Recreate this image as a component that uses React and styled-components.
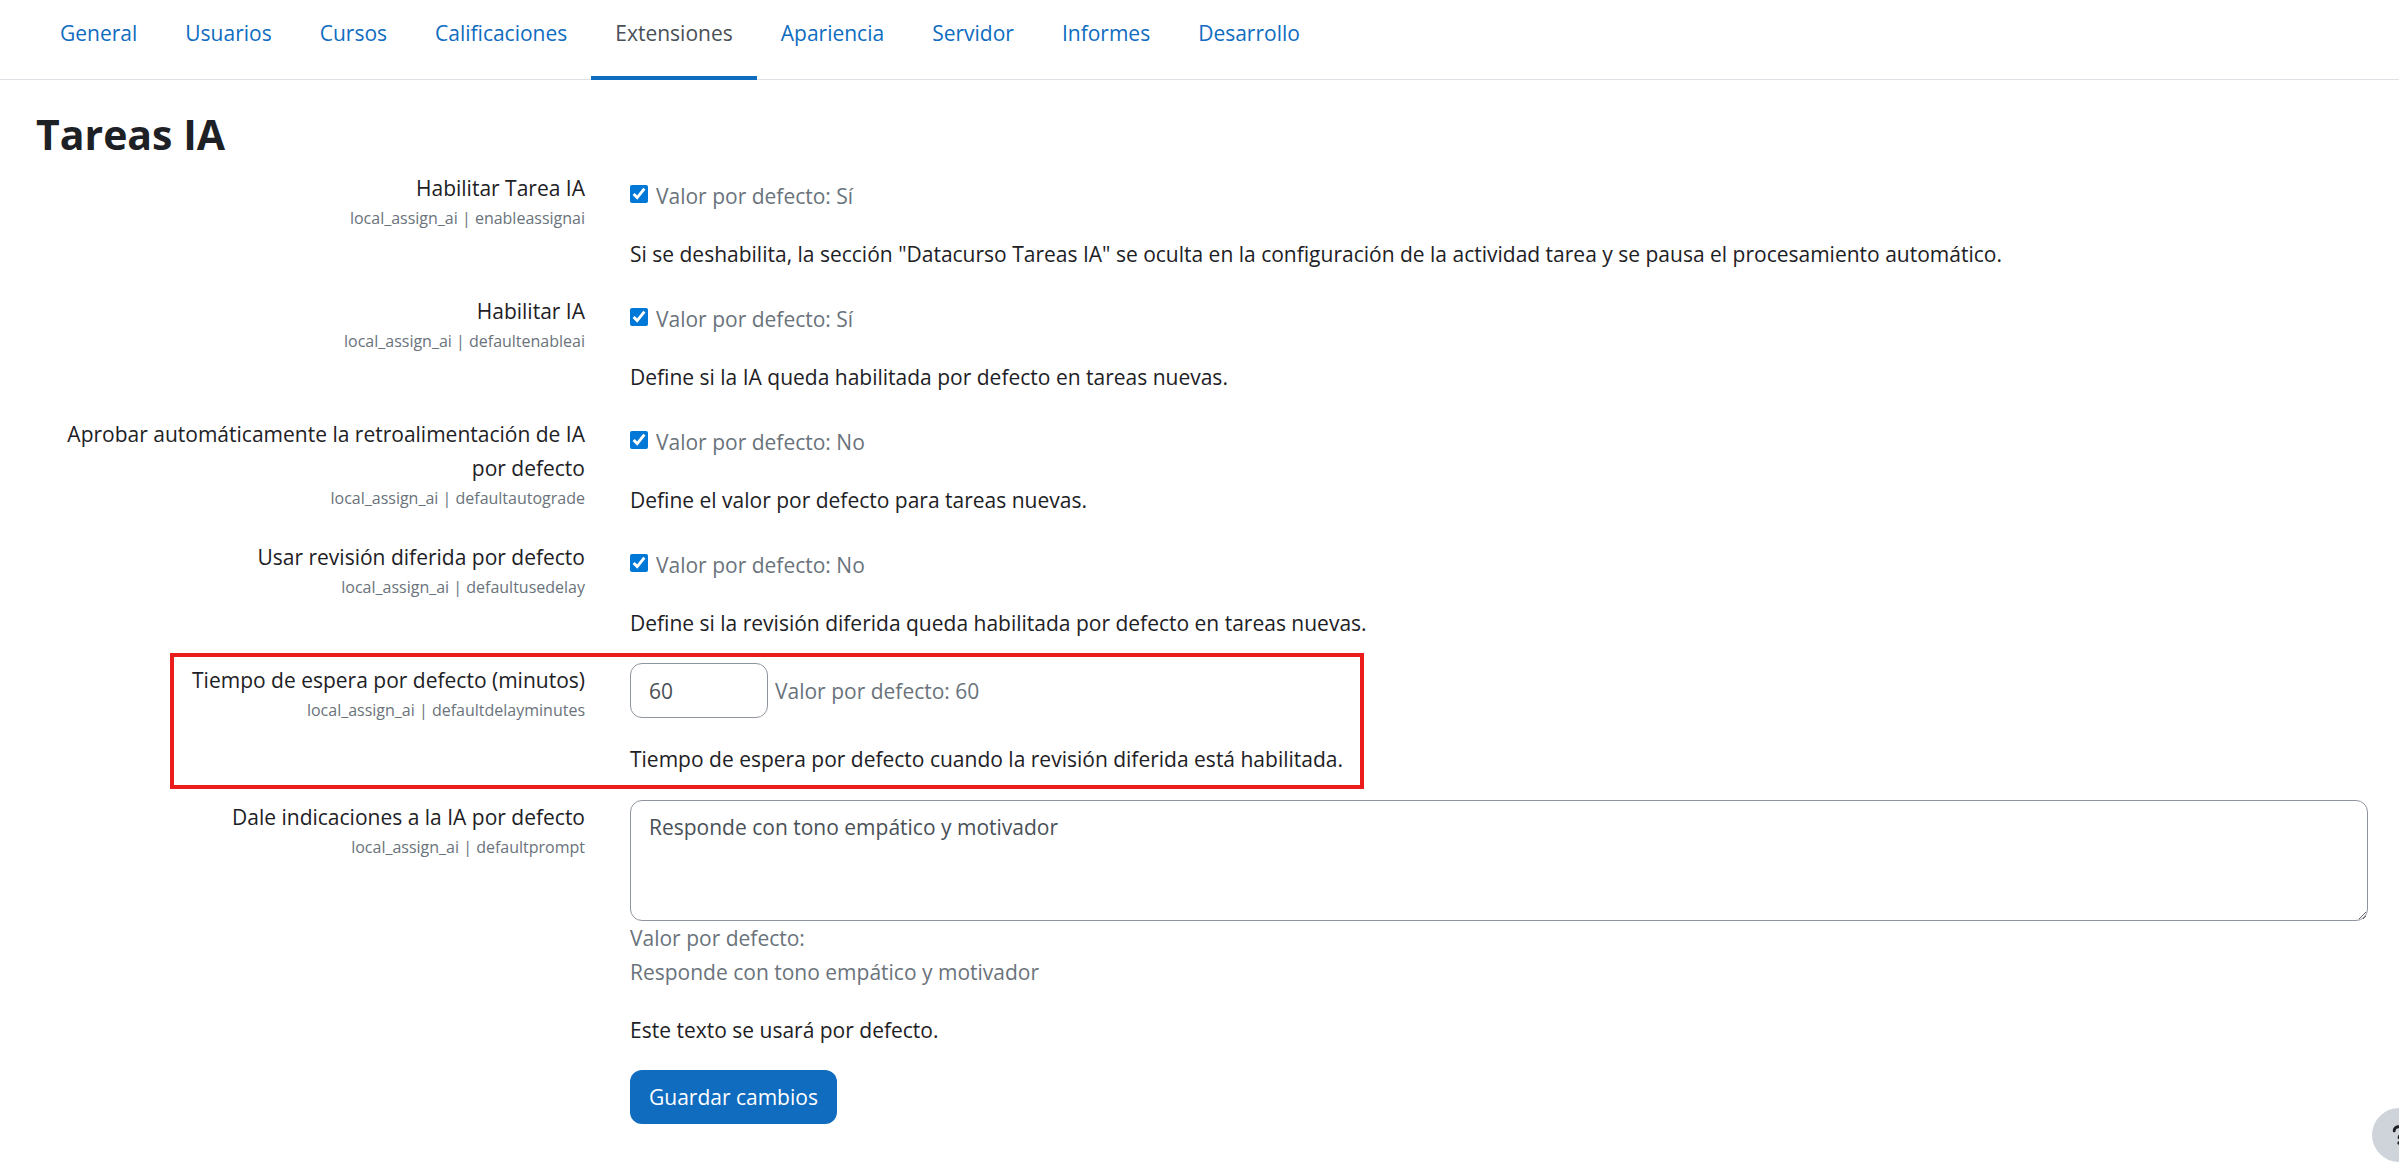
import React from "react";
import styled, { createGlobalStyle } from "styled-components";
import { FaQuestion } from "react-icons/fa6";

const GlobalStyle = createGlobalStyle`
  * {
    box-sizing: border-box;
  }
  body {
    margin: 0;
    background-color: #fff;
    color: #1d2125;
    font-family: "Open Sans", "Noto Sans", sans-serif;
    font-size: 21px;
    line-height: 34px;
  }
  button,
  input,
  textarea {
    font: inherit;
  }
`;

const Nav = styled.nav`
  display: flex;
  height: 80px;
  padding: 0 36px;
  border-bottom: 1px solid #dee2e6;
`;

const Tab = styled.a`
  height: 80px;
  padding: 16px 24px 0;
  border-bottom: 4px solid ${(props) => (props.$active ? "#0f6cbf" : "transparent")};
  color: ${(props) => (props.$active ? "#495057" : "#0f6cbf")};
  text-decoration: none;
  white-space: nowrap;
`;

const Main = styled.main`
  padding: 27px 9px 24px 14px;
`;

const Title = styled.h1`
  margin: 0;
  padding: 0 22px 10px;
  font-size: 41px;
  font-weight: 700;
  line-height: 54px;
`;

const Row = styled.div`
  display: flex;
  position: relative;
  padding-bottom: ${(props) => (props.$highlighted ? "24px" : "23px")};
`;

const LabelColumn = styled.div`
  flex: 0 0 25%;
  padding: 0 23px 0 22px;
  text-align: right;
`;

const Label = styled.label`
  display: block;
`;

const ShortName = styled.span`
  display: block;
  color: #6a737b;
  font-size: 16px;
  line-height: 26px;
`;

const Field = styled.div`
  flex: 1;
  min-width: 0;
  padding: 0 22px;
`;

const CheckLine = styled.div`
  display: flex;
  align-items: center;
  gap: 8px;
  padding-top: 8px;
`;

const Checkbox = styled.input`
  width: 18px;
  height: 18px;
  margin: 0 0 4px;
  accent-color: #0078d7;
`;

const InputLine = styled.div`
  display: flex;
  align-items: center;
  gap: 7px;
`;

const TextInput = styled.input`
  width: 138px;
  height: 55px;
  padding: 8px 18px;
  border: 1px solid #8f959e;
  border-radius: 12px;
  background-color: #fff;
  color: #495057;
`;

const TextArea = styled.textarea`
  display: block;
  width: 100%;
  height: 121px;
  padding: 9px 18px;
  border: 1px solid #8f959e;
  border-radius: 12px;
  background-color: #fff;
  color: #495057;
  resize: vertical;
`;

const Default = styled.div`
  color: #6a737b;
`;

const Description = styled.p`
  margin: 24px 0 0;
`;

const Highlight = styled.div`
  position: absolute;
  top: -10px;
  left: 156px;
  width: 1194px;
  height: 136px;
  border: 4px solid #eb1c1c;
  pointer-events: none;
`;

const Actions = styled.div`
  padding-left: calc(25% + 22px);
`;

const SaveButton = styled.button`
  height: 54px;
  padding: 0 19px;
  border: 0;
  border-radius: 12px;
  background-color: #0f6cbf;
  color: #fff;
  cursor: pointer;
`;

const HelpButton = styled.button`
  display: flex;
  align-items: center;
  justify-content: center;
  position: fixed;
  right: -27px;
  bottom: 13px;
  width: 54px;
  height: 54px;
  padding: 0;
  border: 0;
  border-radius: 50%;
  background-color: #ced4da;
  color: #1d2125;
  cursor: pointer;
`;

const tabs = [
  "General",
  "Usuarios",
  "Cursos",
  "Calificaciones",
  "Extensiones",
  "Apariencia",
  "Servidor",
  "Informes",
  "Desarrollo",
];

const checks = [
  {
    name: "enableassignai",
    label: "Habilitar Tarea IA",
    value: "Sí",
    text: 'Si se deshabilita, la sección "Datacurso Tareas IA" se oculta en la configuración de la actividad tarea y se pausa el procesamiento automático.',
  },
  {
    name: "defaultenableai",
    label: "Habilitar IA",
    value: "Sí",
    text: "Define si la IA queda habilitada por defecto en tareas nuevas.",
  },
  {
    name: "defaultautograde",
    label: "Aprobar automáticamente la retroalimentación de IA por defecto",
    value: "No",
    text: "Define el valor por defecto para tareas nuevas.",
  },
  {
    name: "defaultusedelay",
    label: "Usar revisión diferida por defecto",
    value: "No",
    text: "Define si la revisión diferida queda habilitada por defecto en tareas nuevas.",
  },
];

const Setting = ({ name, label, text, highlighted, children }) => (
  <Row $highlighted={highlighted}>
    <LabelColumn>
      <Label htmlFor={name}>{label}</Label>
      <ShortName>local_assign_ai | {name}</ShortName>
    </LabelColumn>
    <Field>
      {children}
      <Description>{text}</Description>
    </Field>
    {highlighted && <Highlight />}
  </Row>
);

export default () => {
  return (
    <>
      <GlobalStyle />
      <Nav>
        {tabs.map((tab) => (
          <Tab key={tab} href="#" $active={tab === "Extensiones"}>
            {tab}
          </Tab>
        ))}
      </Nav>
      <Main>
        <Title>Tareas IA</Title>
        <form onSubmit={(e) => e.preventDefault()}>
          {checks.map((c) => (
            <Setting key={c.name} name={c.name} label={c.label} text={c.text}>
              <CheckLine>
                <Checkbox type="checkbox" id={c.name} defaultChecked />
                <Default>Valor por defecto: {c.value}</Default>
              </CheckLine>
            </Setting>
          ))}
          <Setting
            name="defaultdelayminutes"
            label="Tiempo de espera por defecto (minutos)"
            text="Tiempo de espera por defecto cuando la revisión diferida está habilitada."
            highlighted
          >
            <InputLine>
              <TextInput type="text" id="defaultdelayminutes" defaultValue="60" />
              <Default>Valor por defecto: 60</Default>
            </InputLine>
          </Setting>
          <Setting
            name="defaultprompt"
            label="Dale indicaciones a la IA por defecto"
            text="Este texto se usará por defecto."
          >
            <TextArea
              id="defaultprompt"
              defaultValue="Responde con tono empático y motivador"
            />
            <Default>
              Valor por defecto:
              <br />
              Responde con tono empático y motivador
            </Default>
          </Setting>
          <Actions>
            <SaveButton type="submit">Guardar cambios</SaveButton>
          </Actions>
        </form>
      </Main>
      <HelpButton type="button" aria-label="Ayuda">
        <FaQuestion size={22} />
      </HelpButton>
    </>
  );
};
